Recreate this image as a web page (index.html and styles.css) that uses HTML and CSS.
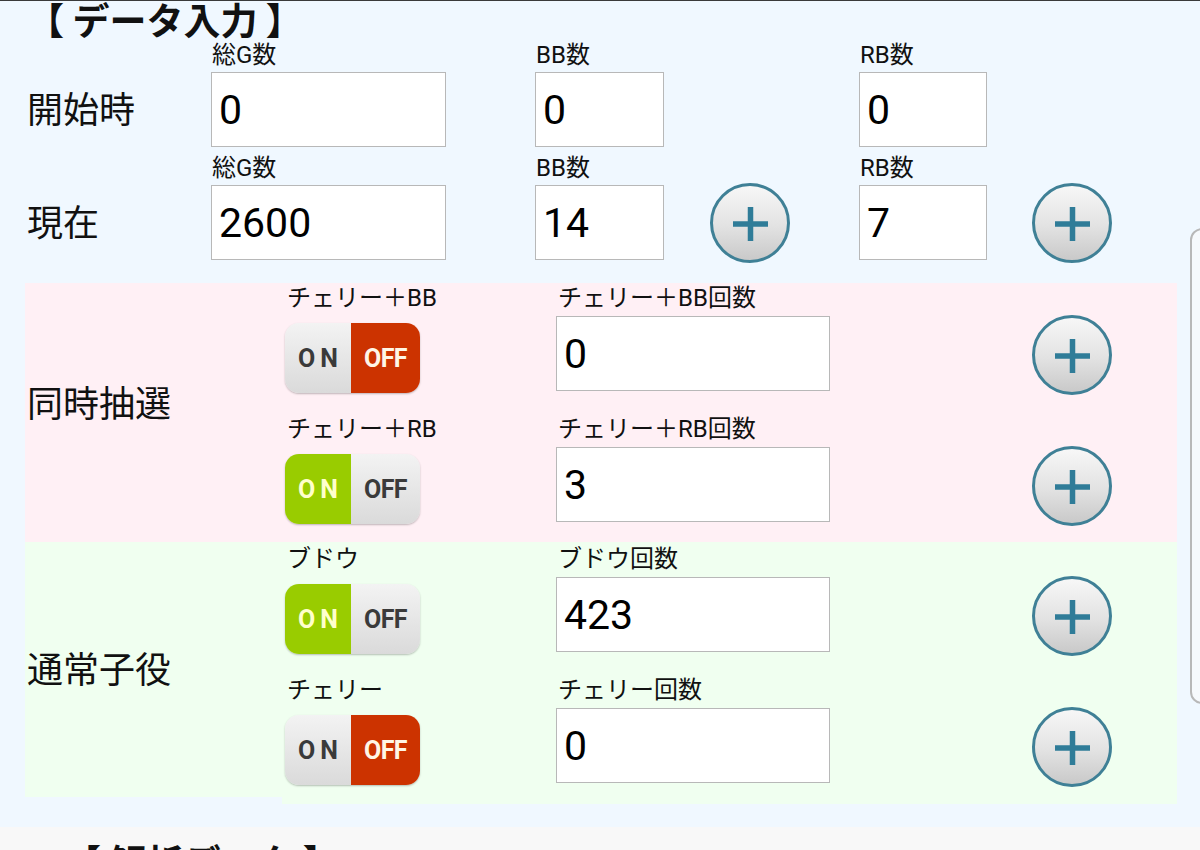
FILE: index.html
```html
<!DOCTYPE html>
<html lang="ja">
<head>
<meta charset="utf-8">
<title>データ入力</title>
<link rel="stylesheet" href="styles.css">
</head>
<body>
<div class="page">
  <h2 class="title">【 データ入力 】</h2>

  <div class="top">
    <div class="trow">
      <div class="main-label">開始時</div>
      <div class="flabel c2">総G数</div>
      <input class="num w-g c2" type="text" value="0" readonly>
      <div class="flabel c3">BB数</div>
      <input class="num w-bb c3" type="text" value="0" readonly>
      <div class="flabel c5">RB数</div>
      <input class="num w-rb c5" type="text" value="0" readonly>
    </div>
    <div class="trow">
      <div class="main-label">現在</div>
      <div class="flabel c2">総G数</div>
      <input class="num w-g c2" type="text" value="2600" readonly>
      <div class="flabel c3">BB数</div>
      <input class="num w-bb c3" type="text" value="14" readonly>
      <div class="plus c4"><svg viewBox="0 0 80 80"><path d="M23 41H58M40.5 24V58"/></svg></div>
      <div class="flabel c5">RB数</div>
      <input class="num w-rb c5" type="text" value="7" readonly>
      <div class="plus c6"><svg viewBox="0 0 80 80"><path d="M23 41H58M40.5 24V58"/></svg></div>
    </div>
  </div>

  <div class="section pink">
    <div class="sec-label pink-label">同時抽選</div>
    <div class="sec-body">
      <div class="srow">
        <div class="slabel">チェリー＋BB</div>
        <div class="toggle off-active"><span class="on">ON</span><span class="off">OFF</span></div>
        <div class="slabel s2">チェリー＋BB回数</div>
        <input class="num w-cnt s2" type="text" value="0" readonly>
        <div class="plus s3"><svg viewBox="0 0 80 80"><path d="M23 41H58M40.5 24V58"/></svg></div>
      </div>
      <div class="srow">
        <div class="slabel">チェリー＋RB</div>
        <div class="toggle on-active"><span class="on">ON</span><span class="off">OFF</span></div>
        <div class="slabel s2">チェリー＋RB回数</div>
        <input class="num w-cnt s2" type="text" value="3" readonly>
        <div class="plus s3"><svg viewBox="0 0 80 80"><path d="M23 41H58M40.5 24V58"/></svg></div>
      </div>
    </div>
  </div>

  <div class="section green">
    <div class="sec-label green-label">通常子役</div>
    <div class="sec-body green-body">
      <div class="srow">
        <div class="slabel">ブドウ</div>
        <div class="toggle on-active"><span class="on">ON</span><span class="off">OFF</span></div>
        <div class="slabel s2">ブドウ回数</div>
        <input class="num w-cnt s2" type="text" value="423" readonly>
        <div class="plus s3"><svg viewBox="0 0 80 80"><path d="M23 41H58M40.5 24V58"/></svg></div>
      </div>
      <div class="srow">
        <div class="slabel">チェリー</div>
        <div class="toggle off-active"><span class="on">ON</span><span class="off">OFF</span></div>
        <div class="slabel s2">チェリー回数</div>
        <input class="num w-cnt s2" type="text" value="0" readonly>
        <div class="plus s3"><svg viewBox="0 0 80 80"><path d="M23 41H58M40.5 24V58"/></svg></div>
      </div>
    </div>
  </div>

  <div class="analysis">
    <h2 class="title2">【 解析データ 】</h2>
  </div>

  <div class="scroll-hint"></div>
</div>
</body>
</html>
```

FILE: styles.css
```css
html, body {
  margin: 0;
  padding: 0;
}
body {
  background: #f0f8ff;
  font-family: Roboto, "Noto Sans CJK JP", sans-serif;
  color: #111;
  border-top: 1px solid #3a3a3a;
  overflow: hidden;
  height: 849px;
}
.page {
  position: relative;
  width: 1200px;
  height: 849px;
}
.title {
  margin: 0 0 1px 0;
  padding-left: 27px;
  height: 40px;
  font-size: 37px;
  line-height: 36px;
  font-weight: bold;
  font-family: "Noto Sans CJK JP", sans-serif;
  color: #111;
  white-space: pre;
}

/* top rows */
.top {
  display: flex;
  flex-direction: column;
  gap: 8px;
  margin-left: 25px;
}
.trow {
  display: grid;
  grid-template-columns: 186px 324px 175px 149px 173px 80px;
  grid-template-rows: 26px 75px;
  row-gap: 4px;
}
.main-label {
  grid-column: 1;
  grid-row: 2;
  align-self: center;
  padding-left: 2px;
  padding-bottom: 6px;
  font-size: 36px;
  line-height: 44px;
  font-family: "Noto Sans CJK JP", sans-serif;
}
.flabel {
  grid-row: 1;
  font-size: 24px;
  line-height: 26px;
  padding-left: 1px;
  color: #111;
  white-space: nowrap;
}
.trow input.num { grid-row: 2; }
.c2 { grid-column: 2; }
.c3 { grid-column: 3; }
.c4 { grid-column: 4; grid-row: 2; }
.c5 { grid-column: 5; }
.c6 { grid-column: 6; grid-row: 2; }

.num {
  box-sizing: border-box;
  height: 75px;
  margin: 0;
  border: 1px solid #b8b8b8;
  border-radius: 0;
  background: #fff;
  padding: 0 0 0 7px;
  font-family: Roboto, sans-serif;
  font-size: 41px;
  color: #000;
  outline: none;
}
.w-g { width: 235px; }
.w-bb { width: 129px; }
.w-rb { width: 128px; }
.w-cnt { width: 274px; }

.plus {
  box-sizing: border-box;
  width: 80px;
  height: 80px;
  border-radius: 50%;
  border: 3px solid #3f8096;
  background: linear-gradient(#f7f7f7 0%, #e2e2e2 55%, #c9c9c9 100%);
  align-self: center;
  justify-self: start;
  position: relative;
}
.plus svg {
  position: absolute;
  left: -3px;
  top: -3px;
  width: 80px;
  height: 80px;
}
.plus path {
  stroke: #2f7c98;
  stroke-width: 5.5;
  fill: none;
}

/* sections */
.section {
  display: flex;
  width: 1152px;
  margin-left: 25px;
}
.pink { margin-top: 23px; }
.pink .sec-label, .pink .sec-body { background: #fff0f5; }
.green { align-items: flex-start; }
.green .sec-label, .green .sec-body { background: #f0fff0; }
.sec-label {
  width: 257px;
  flex: none;
  display: flex;
  align-items: center;
  padding-left: 2px;
  box-sizing: border-box;
  font-size: 36px;
  font-family: "Noto Sans CJK JP", sans-serif;
}
.pink-label { padding-bottom: 24px; }
.green-label { height: 255px; padding-bottom: 6px; }
.sec-body {
  flex: 1;
  display: flex;
  flex-direction: column;
  gap: 25px;
  padding: 2px 0 20px 0;
}
.green-body { padding: 4px 0 21px 0; }
.srow {
  display: grid;
  grid-template-columns: 274px 476px 80px;
  grid-template-rows: 26px 75px;
  row-gap: 5px;
}
.slabel {
  grid-row: 1;
  grid-column: 1;
  font-size: 24px;
  line-height: 26px;
  padding-left: 5px;
  white-space: nowrap;
}
.slabel.s2 { grid-column: 2; padding-left: 2px; }
.srow input.num { grid-row: 2; grid-column: 2; }
.srow .plus { grid-row: 2; grid-column: 3; align-self: start; margin-top: -1px; }

.toggle {
  grid-row: 2;
  grid-column: 1;
  align-self: start;
  margin: 7px 0 0 3px;
  width: 135px;
  height: 70px;
  border-radius: 14px;
  overflow: hidden;
  display: flex;
  box-shadow: 0 1px 2px rgba(0,0,0,0.25);
  font-family: Roboto, sans-serif;
  font-weight: bold;
  font-size: 25px;
}
.toggle span {
  display: flex;
  align-items: center;
  justify-content: center;
}
.toggle .on { width: 66px; letter-spacing: 5px; padding-left: 5px; box-sizing: border-box; }
.toggle .off { width: 69px; letter-spacing: -0.5px; }
.off-active .on, .on-active .off {
  background: linear-gradient(#f3f3f3, #dadada);
  color: #3a3a3a;
}
.off-active .off {
  background: #cc3300;
  color: #fff6e6;
}
.on-active .on {
  background: #99cc00;
  color: #ffffcc;
}

/* analysis */
.analysis {
  margin-top: 23px;
  background: #f8f8f8;
  height: 60px;
  padding-top: 14px;
  box-sizing: border-box;
}
.title2 {
  margin: 0;
  padding-left: 64px;
  font-size: 37px;
  line-height: 40px;
  font-weight: bold;
  font-family: "Noto Sans CJK JP", sans-serif;
  white-space: pre;
}

.scroll-hint {
  position: absolute;
  left: 1190px;
  top: 227px;
  width: 30px;
  height: 472px;
  border: 2px solid #b8b8b8;
  border-radius: 12px;
  background: #f6f9fc;
}
```
